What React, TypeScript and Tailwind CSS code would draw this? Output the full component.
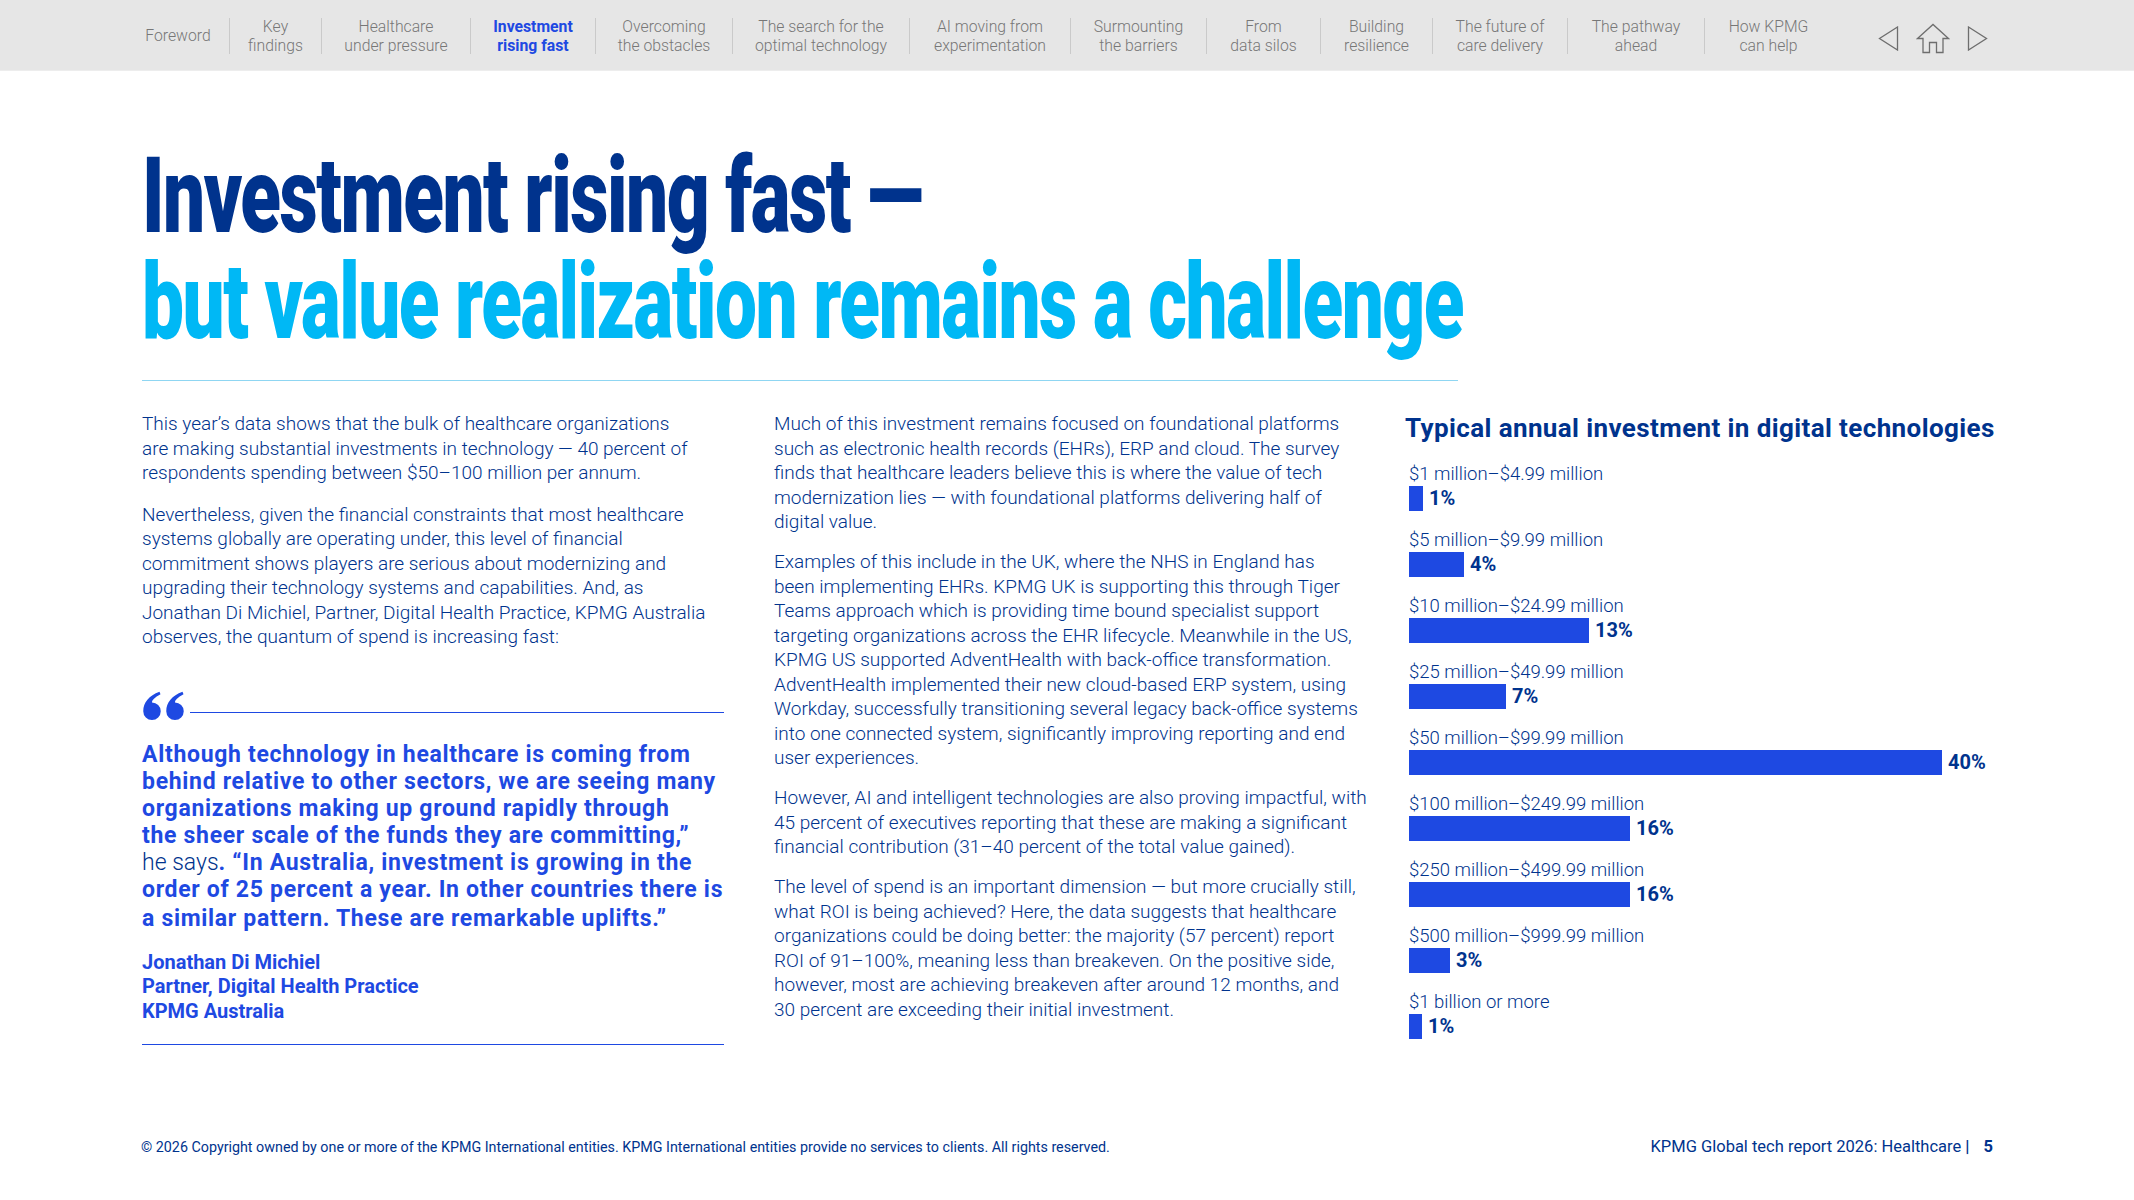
import React from "react";

type NavItem = { lines: string[]; w: string; active?: boolean };

const NAV: NavItem[] = [
  { lines: ["Foreword"], w: "w-[102px]" },
  { lines: ["Key", "findings"], w: "w-[91px]" },
  { lines: ["Healthcare", "under pressure"], w: "w-[148px]" },
  { lines: ["Investment", "rising fast"], w: "w-[124px]", active: true },
  { lines: ["Overcoming", "the obstacles"], w: "w-[136px]" },
  { lines: ["The search for the", "optimal technology"], w: "w-[176px]" },
  { lines: ["AI moving from", "experimentation"], w: "w-[160px]" },
  { lines: ["Surmounting", "the barriers"], w: "w-[135px]" },
  { lines: ["From", "data silos"], w: "w-[113px]" },
  { lines: ["Building", "resilience"], w: "w-[111px]" },
  { lines: ["The future of", "care delivery"], w: "w-[134px]" },
  { lines: ["The pathway", "ahead"], w: "w-[136px]" },
  { lines: ["How KPMG", "can help"], w: "w-[127px]" },
];

const COL1_P1 = [
  "This year’s data shows that the bulk of healthcare organizations",
  "are making substantial investments in technology — 40 percent of",
  "respondents spending between $50–100 million per annum.",
];

const COL1_P2 = [
  "Nevertheless, given the financial constraints that most healthcare",
  "systems globally are operating under, this level of financial",
  "commitment shows players are serious about modernizing and",
  "upgrading their technology systems and capabilities. And, as",
  "Jonathan Di Michiel, Partner, Digital Health Practice, KPMG Australia",
  "observes, the quantum of spend is increasing fast:",
];

const COL2 = [
  [
    "Much of this investment remains focused on foundational platforms",
    "such as electronic health records (EHRs), ERP and cloud. The survey",
    "finds that healthcare leaders believe this is where the value of tech",
    "modernization lies — with foundational platforms delivering half of",
    "digital value.",
  ],
  [
    "Examples of this include in the UK, where the NHS in England has",
    "been implementing EHRs. KPMG UK is supporting this through Tiger",
    "Teams approach which is providing time bound specialist support",
    "targeting organizations across the EHR lifecycle. Meanwhile in the US,",
    "KPMG US supported AdventHealth with back-office transformation.",
    "AdventHealth implemented their new cloud-based ERP system, using",
    "Workday, successfully transitioning several legacy back-office systems",
    "into one connected system, significantly improving reporting and end",
    "user experiences.",
  ],
  [
    "However, AI and intelligent technologies are also proving impactful, with",
    "45 percent of executives reporting that these are making a significant",
    "financial contribution (31–40 percent of the total value gained).",
  ],
  [
    "The level of spend is an important dimension — but more crucially still,",
    "what ROI is being achieved? Here, the data suggests that healthcare",
    "organizations could be doing better: the majority (57 percent) report",
    "ROI of 91–100%, meaning less than breakeven. On the positive side,",
    "however, most are achieving breakeven after around 12 months, and",
    "30 percent are exceeding their initial investment.",
  ],
];

// bar widths measured off the original chart (px)
const CHART = [
  { label: "$1 million–$4.99 million", pct: "1%", w: 14 },
  { label: "$5 million–$9.99 million", pct: "4%", w: 55 },
  { label: "$10 million–$24.99 million", pct: "13%", w: 180 },
  { label: "$25 million–$49.99 million", pct: "7%", w: 97 },
  { label: "$50 million–$99.99 million", pct: "40%", w: 533 },
  { label: "$100 million–$249.99 million", pct: "16%", w: 221 },
  { label: "$250 million–$499.99 million", pct: "16%", w: 221 },
  { label: "$500 million–$999.99 million", pct: "3%", w: 41 },
  { label: "$1 billion or more", pct: "1%", w: 13 },
];

function Lines({ lines }: { lines: string[] }) {
  return (
    <>
      {lines.map((l, i) => (
        <span key={i} className="block whitespace-nowrap">
          {l}
        </span>
      ))}
    </>
  );
}

function NavBar() {
  return (
    <div className="flex h-[71px] items-center border-b border-[#ededed] bg-[#e6e6e6] pl-[127px] pt-[1px]">
      {NAV.map((item, i) => (
        <React.Fragment key={i}>
          {i > 0 && <div className="h-[36px] w-px bg-[#cacaca]" />}
          <div
            className={`${item.w} text-center text-[15.75px] leading-[19px] ${
              item.active ? "font-bold text-[#1e49e2]" : "font-light text-[#777777]"
            }`}
          >
            <Lines lines={item.lines} />
          </div>
        </React.Fragment>
      ))}
      <div className="ml-[46px] mt-[6px] flex items-center">
        <svg width="21" height="25" viewBox="0 0 21 25" fill="none" stroke="#6e6e6e" strokeWidth="1.3">
          <polygon points="19.5,1 1.5,12.5 19.5,24" strokeLinejoin="miter" />
        </svg>
        <svg className="ml-[17px]" width="34" height="31" viewBox="0 0 34 31" fill="none" stroke="#6e6e6e" strokeWidth="1.3">
          <path d="M7 15.5 H1.5 L17 1.5 L32.5 15.5 H27 V29.5 H20.5 V19.5 H13.5 V29.5 H7 Z" strokeLinejoin="miter" />
        </svg>
        <svg className="ml-[17px]" width="21" height="25" viewBox="0 0 21 25" fill="none" stroke="#6e6e6e" strokeWidth="1.3">
          <polygon points="1.5,1 19.5,12.5 1.5,24" strokeLinejoin="miter" />
        </svg>
      </div>
    </div>
  );
}

// pull-quote ornament
function QuoteMark() {
  const blob = "M10 11.5 A8.75 8.75 0 1 1 1.25 20.25 C1.25 11.5 7 4.5 17.5 0.75 L18.5 3.25 C12.5 6.5 10 9 10 11.5 Z";
  return (
    <svg width="44" height="30" viewBox="0 0 44 30" fill="#1e49e2">
      <path d={blob} />
      <path d={blob} transform="translate(23 0)" />
    </svg>
  );
}

function Chart() {
  return (
    <div className="ml-[31px] w-[600px] pt-[1px]">
      <h2 className="whitespace-nowrap text-[26px] font-bold leading-[30px] tracking-[0.015em] text-[#00338d]">
        Typical annual investment in digital technologies
      </h2>
      <div className="mt-[19px] pl-[4px]">
        {CHART.map((row, i) => (
          <div key={i} className="mb-[17px]">
            <div className="whitespace-nowrap text-[18.5px] font-light leading-[24px] text-[#00338d]">{row.label}</div>
            <div className="flex h-[25px] items-center">
              <div className="h-[25px] bg-[#1e49e2]" style={{ width: row.w }} />
              <span className="ml-[6px] text-[20px] font-bold leading-[25px] text-[#00338d]">{row.pct}</span>
            </div>
          </div>
        ))}
      </div>
    </div>
  );
}

export default function App() {
  return (
    <div className="flex h-[1200px] w-[2134px] flex-col overflow-hidden bg-white font-[Roboto,sans-serif]">
      <NavBar />

      <div className="pl-[142px] pt-[73px]">
        <h1 className="origin-left scale-x-[0.711] whitespace-nowrap text-[105px] font-black leading-[106px] tracking-[-0.02em]">
          <span className="block text-[#00338d]">Investment rising fast —</span>
          <span className="block text-[#00b8f5]">but value realization remains a challenge</span>
        </h1>
        <div className="mt-[24px] h-px w-[1316px] bg-[#8fd6f2]" />

        <div className="mt-[31px] flex">
          {/* left column */}
          <div className="w-[582px] text-[19px] leading-[24.5px] text-[#00338d]">
            <p className="mb-[17px] font-light">
              <Lines lines={COL1_P1} />
            </p>
            <p className="font-light">
              <Lines lines={COL1_P2} />
            </p>

            <div className="mt-[41px] flex h-[30px] items-start">
              <QuoteMark />
              <div className="ml-[4px] mt-[21px] h-px flex-1 bg-[#1e49e2]" />
            </div>

            <p className="mt-[20px] text-[23px] font-bold leading-[27px] tracking-[0.03em] text-[#1e49e2]">
              <span className="block whitespace-nowrap">Although technology in healthcare is coming from</span>
              <span className="block whitespace-nowrap">behind relative to other sectors, we are seeing many</span>
              <span className="block whitespace-nowrap">organizations making up ground rapidly through</span>
              <span className="block whitespace-nowrap">the sheer scale of the funds they are committing,”</span>
              <span className="block whitespace-nowrap">
                <span className="font-light tracking-normal text-[#00338d]">he says</span>. “In Australia, investment is growing in the
              </span>
              <span className="block whitespace-nowrap">order of 25 percent a year. In other countries there is</span>
              <span className="block whitespace-nowrap pt-[2px]">a similar pattern. These are remarkable uplifts.”</span>
            </p>

            <p className="mt-[18px] text-[20px] font-bold text-[#1e49e2]">
              <span className="block">Jonathan Di Michiel</span>
              <span className="block">Partner, Digital Health Practice</span>
              <span className="block">KPMG Australia</span>
            </p>
            <div className="mt-[21px] h-px w-[582px] bg-[#1e49e2]" />
          </div>

          {/* middle column */}
          <div className="ml-[50px] w-[600px] text-[19px] font-light leading-[24.5px] text-[#00338d]">
            {COL2.map((p, i) => (
              <p key={i} className="mb-[15.5px]">
                <Lines lines={p} />
              </p>
            ))}
          </div>

          <Chart />
        </div>
      </div>

      <div className="mt-auto flex items-center justify-between px-[141px] pb-[45px] text-[#00338d]">
        <span className="whitespace-nowrap text-[14.3px] leading-[16px]">
          © 2026 Copyright owned by one or more of the KPMG International entities. KPMG International entities provide no services to clients. All rights reserved.
        </span>
        <span className="whitespace-nowrap text-[16.5px] leading-[16px]">
          KPMG Global tech report 2026: Healthcare <span className="font-bold">|</span>
          <span className="ml-[14px] font-bold">5</span>
        </span>
      </div>
    </div>
  );
}
